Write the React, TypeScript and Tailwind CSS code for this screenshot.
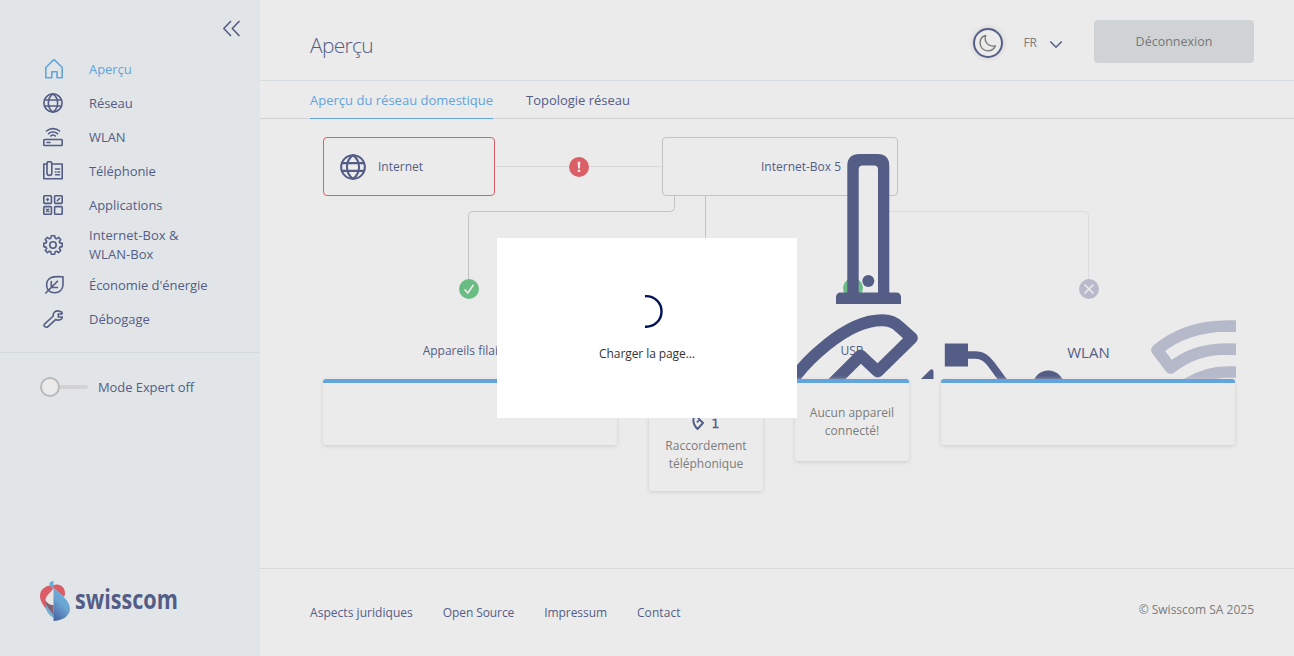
import type { ReactNode } from 'react';

function Icon({ children, size = 20, sw = 1.6, className = '' }: { children: ReactNode; size?: number; sw?: number; className?: string }) {
  return (
    <svg width={size} height={size} viewBox="0 0 20 20" fill="none" stroke="currentColor" strokeWidth={sw} strokeLinecap="round" strokeLinejoin="round" className={`shrink-0 ${className}`}>
      {children}
    </svg>
  );
}

const globe = (
  <>
    <circle cx="10" cy="10" r="9.1" />
    <path d="M10 .9C3.8 5.500 3.800 14.500 10 19.100M10 .9C16.200 5.500 16.200 14.500 10 19.100" />
    <path d="M1.600 7H18.400M1.600 13H18.400" />
  </>
);

const nav: { label: string; icon: ReactNode; active?: boolean; shift?: boolean; tall?: boolean }[] = [
  { label: 'Aperçu', active: true, shift: true, icon: <path d="M1.800 8.500 10 .5 18.200 8.500V18.800H13V12.800H7.800V18.800H1.800Z" /> },
  { label: 'Réseau', icon: globe },
  {
    label: 'WLAN',
    icon: (
      <>
        <rect x=".8" y="12.500" width="18.400" height="6" rx=".8" />
        <path d="M4 15.500H7M3.500 4C7.200.8 12.800.8 16.500 4M5.500 6.600C8 4.400 12 4.400 14.500 6.600M7.700 9C9 7.900 11 7.900 12.300 9" />
      </>
    ),
  },
  {
    label: 'Téléphonie',
    icon: (
      <>
        <path d="M4 3H.8V17.700H19.200V3H9" />
        <rect x="4" y=".4" width="4.800" height="14" rx="2.400" />
        <path d="M12.500 8H16.500M12.500 11H13M15 11H16.500M12.500 13.800H16.500" />
      </>
    ),
  },
  {
    label: 'Applications',
    icon: (
      <>
        <rect x=".8" y=".8" width="7.600" height="7.600" rx=".8" />
        <rect x="11.600" y=".8" width="7.600" height="7.600" rx=".8" />
        <rect x=".8" y="11.600" width="7.600" height="7.600" rx=".8" />
        <rect x="11.600" y="11.600" width="7.600" height="7.600" rx=".8" />
        <path d="M3.800 4.600H5.400M4.600 3.800V5.400M14.300 5.700 16.500 3.500M3.500 14.300 5.700 16.500M5.700 14.300 3.500 16.500" />
      </>
    ),
  },
  {
    label: 'Internet-Box & WLAN-Box',
    tall: true,
    icon: (
      <>
        <path d="M8.300.8H11.700L12.200 3.200 13.600 3.800 15.600 2.400 17.700 4.500 16.300 6.500 16.900 7.900 19.200 8.400V11.600L16.900 12.100 16.300 13.500 17.700 15.500 15.600 17.600 13.600 16.200 12.200 16.800 11.700 19.200H8.300L7.800 16.800 6.400 16.200 4.400 17.600 2.300 15.500 3.700 13.500 3.100 12.100.8 11.600V8.400L3.100 7.900 3.700 6.500 2.300 4.500 4.400 2.400 6.400 3.800 7.800 3.200Z" />
        <circle cx="10" cy="10" r="3.200" />
      </>
    ),
  },
  {
    label: "Économie d'énergie",
    shift: true,
    icon: <path d="M4.300 15.500C1.500 11.500 2 5.500 6.500 2.900 9.500 1.300 14 1.700 19 1.700V9.500C19 14.500 15.300 17.800 11 17.800 8.300 17.800 6 17 4.300 15.500ZM1.800 18 13.500 6.200M7.300 6.500V12.500H13.500" />,
  },
  {
    label: 'Débogage',
    icon: <path d="M1.500 15.200 10.300 7C9.500 3.500 13 1 16.500 2.200L19 3.200V5H15.300V8H19.200V9C18 11.300 15 11.800 12.800 10.300L5 17.600C4 18.500 2.600 18.300 1.600 17.400 .7 16.600.8 15.900 1.500 15.200Z" />,
  },
];

function Logo() {
  return (
    <div className="flex h-10 items-center">
      <svg width="30" height="40" viewBox="0 0 30 40" className="shrink-0">
        <defs>
          <linearGradient id="sail" x1="0.800" y1="0" x2="0.300" y2="1">
            <stop offset="0" stopColor="#6fb0dc" />
            <stop offset=".5" stopColor="#6ba5d2" />
            <stop offset="1" stopColor="#4c6aa6" />
          </linearGradient>
        </defs>
        <path d="M13.500 4C20 2 25 6 25 12C25 14 24.500 15 24 16L13.500 7C11 12 6 14 5.500 19C5.500 24 11 27 13.500 35C8 30 0 23 0 15C0 8 6 4 13.500 4Z" fill="#dc5d67" />
        <path d="M13.500 8 13.500 24C10 23 7 21 6 18 7 14 10 13 13.500 8Z" fill="#e9e5e4" />
        <path d="M6 23C8 27 11 29 13.500 32V37C9 34 5 30 6 23Z" fill="#75a9d0" />
        <path d="M5.500 19C8 24 12 24 13.500 24V34C10 28 5 25 5.500 19Z" fill="#85606e" />
        <path d="M9.500 2.500C10.500.5 12 0 13.500 0V8C11.500 7 9.500 5 9.500 2.500Z" fill="#69aad5" />
        <path d="M13.500 7C20 13 30 19 30 28C30 35 22 40 13.500 40Z" fill="url(#sail)" />
      </svg>
      <span className="ml-[5px] -mt-[4px] origin-left scale-x-[0.83] text-[26px] leading-10 font-bold">swisscom</span>
    </div>
  );
}

function Sidebar() {
  return (
    <aside className="flex w-[260px] shrink-0 flex-col bg-[#e1e5e7]">
      <div className="flex h-[52px] justify-end pt-[18px] pr-[18px]">
        <Icon sw={1.600}>
          <path strokeLinecap="butt" d="M9 3 1.800 10.500 9 18M17.500 3 10.300 10.500 17.500 18" />
        </Icon>
      </div>
      <nav className="flex h-[300px] flex-col text-[13px] leading-[19px]">
        {nav.map((n) => (
          <a key={n.label} className={`flex items-center pl-[43px] ${n.tall ? 'h-[46px]' : 'h-[34px]'} ${n.active ? 'text-[#62a4de]' : ''}`}>
            <Icon className={n.shift ? 'translate-x-px' : ''}>{n.icon}</Icon>
            <span className={`ml-[26px] ${n.tall ? 'w-[100px] tracking-[0.060px]' : 'tracking-[-0.050px]'}`}>{n.label}</span>
          </a>
        ))}
      </nav>
      <div className="flex items-center border-t border-[#d4dadc] pt-[24px] pl-10">
        <span className="size-5 rounded-full border-2 border-[#b9b9b9] bg-[#ebebeb]" />
        <span className="h-1 w-7 rounded-r bg-[#d2d2d2]" />
        <span className="mt-px ml-[10px] text-[13px] tracking-[-0.080px]">Mode Expert off</span>
      </div>
      <div className="mt-auto pb-[35px] pl-10">
        <Logo />
      </div>
    </aside>
  );
}

function Header() {
  return (
    <header className="flex h-[81px] items-start border-b border-[#d6dcde] pr-10 pl-[50px]">
      <h1 className="mt-[30px] text-[21px] leading-[30px] font-light tracking-[-0.700px]">Aperçu</h1>
      <div className="ml-auto mt-[28px] flex size-[30px] items-center justify-center rounded-full border-2 border-[#545d86] text-[#777] shadow-[0_0_5px_#c8c8cc]">
        <Icon size={18} sw={1.500}>
          <path d="M7.500 1.500C5 8.500 10.500 15 18.300 13.200 16.500 17 13.500 18.800 10 18.800 5 18.800 1.200 15 1.200 10 1.200 6 3.500 2.500 7.500 1.500Z" />
        </Icon>
      </div>
      <span className="mt-[33px] ml-5 text-[12px] leading-5 text-[#7c7c7c]">FR</span>
      <svg width="14" height="10" viewBox="0 0 14 10" fill="none" stroke="currentColor" strokeWidth="1.500" className="mt-[40px] ml-[12px]">
        <path d="M1.300 1.500 7 7.200 12.700 1.500" />
      </svg>
      <button className="mt-5 ml-[31px] h-[43px] w-40 rounded bg-[#cfd3d6] pt-[2px] text-[12.500px] font-medium text-[#777]">Déconnexion</button>
    </header>
  );
}

function Tabs() {
  return (
    <div className="flex h-[38px] gap-[33px] border-b border-[#d0d3d5] pl-[50px] text-[13px]">
      <a className="-mb-px border-b border-[#62a4de] leading-[38px] tracking-[0.010px] text-[#62a4de]">Aperçu du réseau domestique</a>
      <a className="leading-[38px] tracking-[-0.020px]">Topologie réseau</a>
    </div>
  );
}

function Card({ children, className = '' }: { children?: ReactNode; className?: string }) {
  return (
    <div className={`rounded-[3px] border-t-4 border-[#62a4de] bg-[#ebebeb] text-center text-[12px] leading-[18px] text-[#7c7c7c] shadow-[0_1px_4px_#cdcdcd] ${className}`}>
      {children}
    </div>
  );
}

function Diagram() {
  return (
    <div className="relative mt-[18px] ml-[63px] w-[913px]">
      <svg width="913" height="242" viewBox="323 137 913 242" fill="none" className="absolute top-0 left-0">
        <path d="M674.500 196V206.500Q674.500 211.500 669.500 211.500H473.500Q468.500 211.500 468.500 216.500V280M705.500 196V280" stroke="#c3c3c5" />
        <path d="M889 211.500H1083.500Q1088.500 211.500 1088.500 216.500V280" stroke="#dadbdd" />
        <circle cx="469" cy="289" r="10" fill="#69bd84" />
        <path d="M464.500 289.500 467.800 293 473.500 284.800" stroke="#ebebeb" strokeWidth="1.700" />
        <circle cx="1089" cy="289" r="10" fill="#b8bacb" />
        <path d="M1084.500 284.500 1093.500 293.500M1093.500 284.500 1084.500 293.500" stroke="#ebebeb" strokeWidth="1.600" />
      </svg>
      <div className="flex h-[59px] items-center text-[12px]">
        <div className="flex h-full w-[172px] items-center rounded border border-[#db6069] pl-[16px]">
          <Icon size={26} sw={1.600}>{globe}</Icon>
          <span className="ml-[12px]">Internet</span>
        </div>
        <div className="flex flex-1 items-center">
          <span className="h-px w-[74px] bg-[#d9d9db]" />
          <svg width="20" height="20" viewBox="0 0 20 20">
            <circle cx="10" cy="10" r="10" fill="#db5f67" />
            <path d="M8.600 4.800H11.400L10.900 11.500H9.100ZM8.800 12.800H11.200V15H8.800Z" fill="#ebebeb" />
          </svg>
          <span className="h-px flex-1 bg-[#d9d9db]" />
        </div>
        <div className="flex h-full w-[236px] items-center rounded border border-[#c3c3c5] pl-[98px]">Internet-Box 5</div>
        <div className="w-[338px]" />
      </div>
      <div className="flex h-[183px] gap-8 text-center text-[12px]">
        <span className="w-[292px] pt-[146px] mr-[2px]">Appareils filaires</span>
        <span className="w-[114px]" />
        <span className="w-[114px] pt-[146px]">USB</span>
        <span className="w-[295px] pt-[145px] text-[15px]">WLAN</span>
      </div>
      <svg width="913" height="242" viewBox="323 137 913 242" fill="none" className="absolute top-0 left-0">
        <rect x="858" y="165" width="21" height="128" fill="#ebebeb" />
        <circle cx="853" cy="288" r="10" fill="#69bd84" />
        <path fillRule="evenodd" fill="#545d86" d="M847.300 293V166Q847.300 154 859.300 154H877.500Q889.300 154 889.300 166V293H878V169.500Q878 165.500 874 165.500H862.700Q858.700 165.500 858.700 169.500V293Z" />
        <path fill="#545d86" d="M836 304V297.500Q836 292.500 841 292.500H896Q901 292.500 901 297.500V304Z" />
        <circle cx="868.300" cy="281" r="6" fill="#545d86" />
        <path d="M790 384C803 364 845 320.300 882 320.300C889 320.300 895 322.500 899.500 327L911.800 338 877.700 371.500 860.700 355.500 830 386" stroke="#545d86" strokeWidth="12" strokeLinejoin="round" />
        <path d="M921 379 929.500 370.500Q933.500 367.500 933.500 372V379Z" fill="#545d86" />
        <path d="M944.800 343.500H968V366.500H944.800Z" fill="#545d86" />
        <path d="M967 355H975C983 355 987 359 991 364L1005 383" stroke="#545d86" strokeWidth="7.500" />
        <circle cx="1048.300" cy="386" r="15.600" fill="#545d86" />
        <path d="M1240 326.300 1228 326C1198 326 1176 334 1157 350L1170.700 368C1187 355 1204 349 1228 349L1240 349.500M1180 389C1195 377 1210 372 1228 372H1240" stroke="#b6b9c9" strokeWidth="11.700" strokeLinejoin="round" />
      </svg>
      <div className="relative flex items-start gap-8">
        <Card className="h-[66px] w-[294px]" />
        <Card className="h-[112px] w-[114px] pt-[32px]">
          <div className="flex h-[22px] items-center justify-center gap-[6px] text-[#545d86]">
            <svg width="13" height="20" viewBox="0 0 13 20" fill="none" stroke="currentColor" strokeWidth="1.900" strokeLinejoin="round" className="translate-y-[-4px]">
              <path d="M4 1C.5 6 .5 12 5.500 17L11 11 7.500 7.500 5 10.500M4 1 8 4 6 7" />
            </svg>
            <span className="translate-y-[-2px] font-['DejaVu_Sans'] text-[13px] font-medium [-webkit-text-stroke:0.3px]">1</span>
          </div>
          <p>Raccordement téléphonique</p>
        </Card>
        <Card className="h-[82px] w-[114px] pt-[21px]">Aucun appareil connecté!</Card>
        <Card className="h-[66px] w-[294px]" />
      </div>
    </div>
  );
}

export default function App() {
  return (
    <div className="flex h-[656px] w-[1294px] overflow-hidden bg-[#ebebeb] font-['Open_Sans',sans-serif] text-[#545d86]">
      <Sidebar />
      <main className="flex flex-1 flex-col">
        <Header />
        <Tabs />
        <Diagram />
        <footer className="mt-auto flex h-[88px] items-center gap-[30px] border-t border-[#d6dadb] pr-10 pl-[50px] text-[12px]">
          <a className="tracking-[0.040px]">Aspects juridiques</a>
          <a className="tracking-[-0.100px]">Open Source</a>
          <a className="tracking-[-0.060px]">Impressum</a>
          <a className="tracking-[0.080px]">Contact</a>
          <span className="mb-[6px] ml-auto text-[#7c7c7c]">© Swisscom SA 2025</span>
        </footer>
      </main>
      <div className="fixed inset-0 flex items-center justify-center">
        <div className="flex h-[180px] w-[300px] flex-col items-center bg-white pt-[56px] text-[#333]">
          <svg width="36" height="36" viewBox="0 0 36 36" fill="none" stroke="#001155" strokeWidth="2.400">
            <path d="M16 2.200A15.300 15.300 0 1 1 16 32.700" />
          </svg>
          <p className="mt-[15px] text-[12px] leading-[18px] tracking-[-0.080px]">Charger la page...</p>
        </div>
      </div>
    </div>
  );
}
